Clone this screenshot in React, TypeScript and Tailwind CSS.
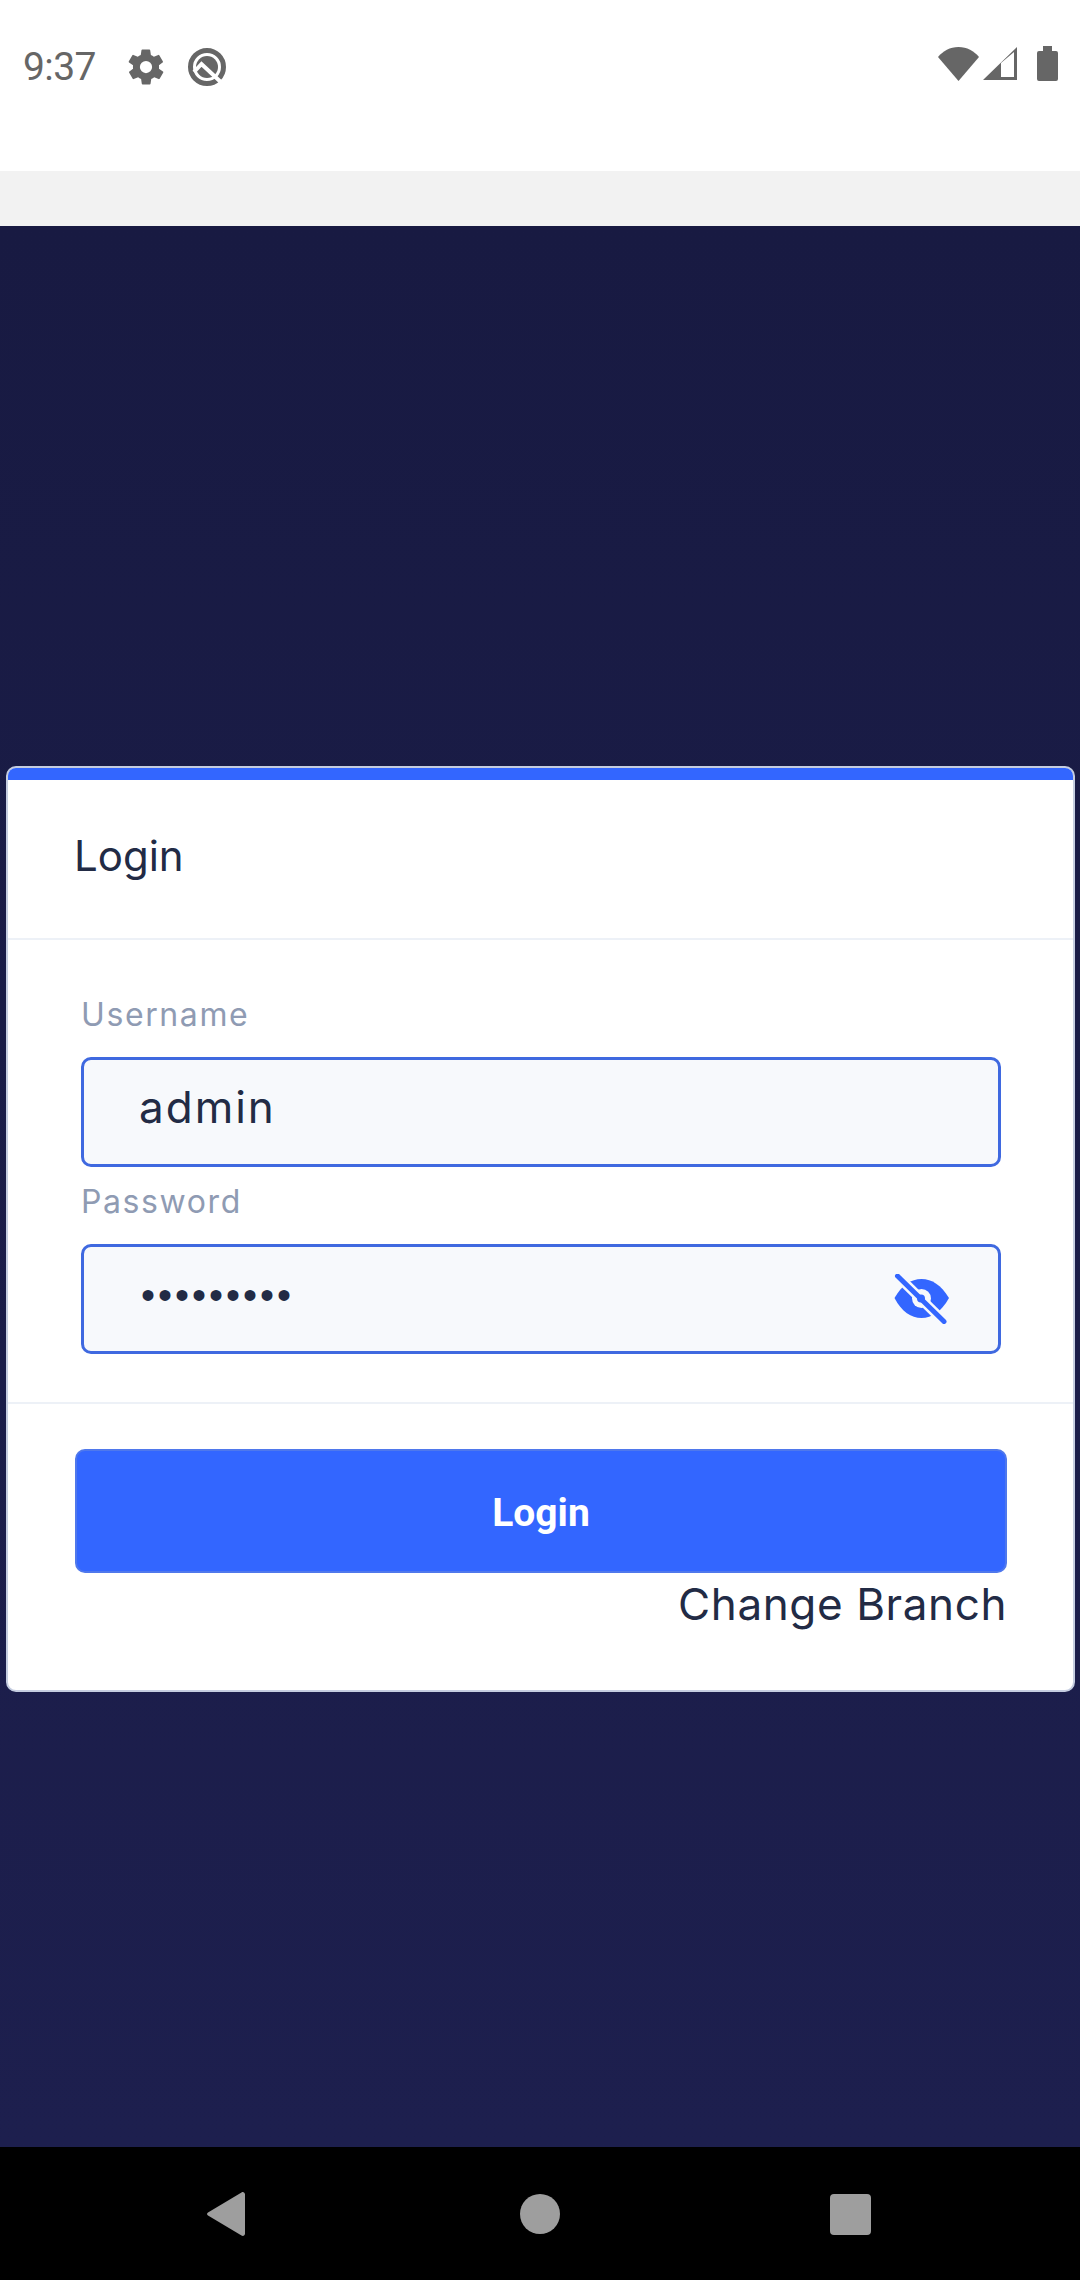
// Login screen inside an Android frame: status bar, app bar strip, card, nav bar.
const FONT = "font-['Inter','Open_Sans',sans-serif]";

function StatusBar() {
  return (
    <div className="flex h-[171px] items-start justify-between bg-white pl-[23px] pr-[22px] pt-[46px]">
      <div className="flex items-center">
        <span className="w-[102px] font-['Roboto',sans-serif] text-[39px] leading-[42px] tracking-[-0.6px] text-[#666666]">9:37</span>
        <svg viewBox="0 0 24 24" className="h-[42px] w-[42px] fill-[#666666]">
          <path d="M19.4 13a7.5 7.5 0 0 0 0-2l2.1-1.6a.5.5 0 0 0 .1-.7l-2-3.4a.5.5 0 0 0-.6-.2l-2.5 1a7.3 7.3 0 0 0-1.7-1l-.4-2.7a.5.5 0 0 0-.5-.4h-4a.5.5 0 0 0-.5.4l-.4 2.7a7.3 7.3 0 0 0-1.7 1l-2.5-1a.5.5 0 0 0-.6.2l-2 3.4a.5.5 0 0 0 .1.7L4.6 11a7.5 7.5 0 0 0 0 2l-2.1 1.6a.5.5 0 0 0-.1.7l2 3.4c.1.2.4.3.6.2l2.5-1c.5.4 1.1.7 1.7 1l.4 2.7c0 .2.2.4.5.4h4c.3 0 .5-.2.5-.4l.4-2.7c.6-.3 1.2-.6 1.7-1l2.5 1c.2.1.5 0 .6-.2l2-3.4a.5.5 0 0 0-.1-.7zM12 15.5a3.500 3.500 0 1 1 0-7 3.500 3.500 0 0 1 0 7z" />
        </svg>
        <svg viewBox="0 0 40 40" className="ml-[20px] h-[40px] w-[40px]">
          <circle cx="20" cy="20" r="16.5" fill="none" stroke="#666666" strokeWidth="5" />
          <circle cx="20" cy="20" r="11" fill="#666666" />
          <path d="M7 25L14.500 17 37 38" fill="none" stroke="#ffffff" strokeWidth="4" />
        </svg>
      </div>
      <div className="flex items-center">
        <svg viewBox="0 0 41 34" className="h-[34px] w-[41px] fill-[#666666]">
          <path d="M20.5 34L0 10C5 4 12 0 20.5 0S36 4 41 10z" />
        </svg>
        <svg viewBox="0 0 34 33" className="ml-[4px] h-[33px] w-[34px] fill-[#666666]">
          <path d="M34 0v33H0zM18 30h13V5L18 16z" fillRule="evenodd" />
        </svg>
        <svg viewBox="0 0 21 35" className="ml-[20px] h-[35px] w-[21px] fill-[#666666]">
          <path d="M6 0h9v5h4a2 2 0 0 1 2 2v26a2 2 0 0 1-2 2H2a2 2 0 0 1-2-2V7a2 2 0 0 1 2-2h4z" />
        </svg>
      </div>
    </div>
  );
}

function EyeOff() {
  return (
    <svg viewBox="0 0 56 50" className="h-[50px] w-[56px]">
      <path d="M.5 24C8 11 17 5 27.500 5S47 11 55 24c-8 14-17 20-27.500 20S8 38 .5 24z" fill="#3366ff" />
      <circle cx="27.5" cy="24.5" r="9.5" fill="#f7f9fc" />
      <path d="M3.5 2L50 47.500" stroke="#f7f9fc" strokeWidth="10" />
      <path d="M3.5 2L50 47.500" stroke="#3366ff" strokeWidth="5" strokeLinecap="round" />
      <circle cx="27" cy="24.5" r="4" fill="#3366ff" />
    </svg>
  );
}

function Field({ label, children }: { label: string; children: React.ReactNode }) {
  return (
    <div>
      <label className="block text-[32px] leading-[40px] tracking-[1.6px] text-[#8f9bb3]">{label}</label>
      <div className="mt-[22px] flex h-[110px] items-center justify-between rounded-[10px] border-[3px] border-[#3f69e0] bg-[#f7f9fc] pl-[55px] pr-[48px]">
        {children}
      </div>
    </div>
  );
}

export default function App() {
  return (
    <div className={`flex h-[2280px] w-[1080px] flex-col overflow-hidden ${FONT}`}>
      <StatusBar />
      <div className="h-[55px] bg-[#f2f2f2]" />
      <main className="flex h-[1921px] flex-col bg-gradient-to-b from-[#181a42] to-[#1d1f4e] pl-[6px] pr-[5px] pt-[540px]">
        <section className="h-[926px] overflow-hidden rounded-[10px] border-2 border-[#c5cde0] bg-white">
          <div className="h-[12px] bg-[#3366ff]" />
          <h1 className="flex h-[160px] items-center border-b-2 border-[#edf1f7] pb-[8px] pl-[66px] text-[42px] text-[#222b45]">Login</h1>
          <form className="h-[464px] border-b-2 border-[#edf1f7] pl-[73px] pr-[72px] pt-[55px]">
            <Field label="Username">
              <span className="pb-[10px] text-[44px] tracking-[2px] text-[#222b45]">admin</span>
            </Field>
            <div className="mt-[15px]">
              <Field label="Password">
                <span className="ml-[2px] pb-[8px] font-['Liberation_Sans',sans-serif] text-[40px] leading-none tracking-[3px] text-[#222b45]">•••••••••</span>
                <EyeOff />
              </Field>
            </div>
          </form>
          <div className="pl-[67px] pr-[66px] pt-[45px]">
            <button type="button" className="flex h-[124px] w-full items-center justify-center rounded-[10px] border-2 border-[#4f78ec] bg-[#3366ff] pt-[5px] font-['Roboto',sans-serif] text-[39px] font-bold text-white">Login</button>
            <p className="mt-[3px] text-right text-[44px] leading-[56px] tracking-[0.6px] text-[#222b45]">Change Branch</p>
          </div>
        </section>
      </main>
      <nav className="flex h-[133px] items-start justify-between bg-black pl-[207px] pr-[209px] pt-[45px]">
        <svg viewBox="0 0 38 44" className="h-[44px] w-[38px] fill-[#9e9e9e]">
          <path d="M1 20.500L34.500.5c1.500-1 3.500 0 3.500 2v39c0 2-2 3-3.500 2L1 23.500c-1.300-.8-1.300-2.200 0-3z" />
        </svg>
        <div className="ml-[5px] mt-[2px] h-[40px] w-[40px] rounded-full bg-[#9e9e9e]" />
        <div className="mt-[2px] h-[41px] w-[41px] rounded-[4px] bg-[#9e9e9e]" />
      </nav>
    </div>
  );
}
